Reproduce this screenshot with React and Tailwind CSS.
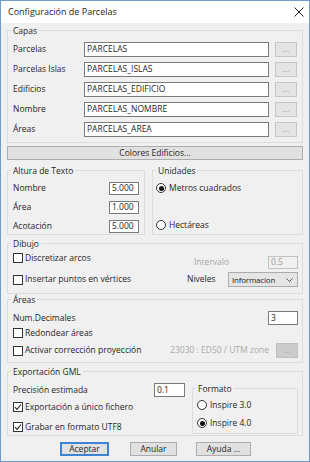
import React from 'react';

const Group = ({ title, className = '', children }) => (
  <div className={`flex flex-col border border-[#dcdcdc] ${className}`}>
    <span className="-mt-[6px] ml-[3px] w-fit bg-[#f0f0f0] px-[2px] leading-[11px]">{title}</span>
    {children}
  </div>
);

const TextBox = ({ value, className = '' }) => (
  <div className={`flex items-center border border-[#7a7a7a] bg-white pl-[2px] leading-none ${className}`}>
    {value}
  </div>
);

const DotsButton = ({ disabled }) => (
  <div
    className={`flex h-[15px] w-[22px] items-center justify-center border leading-none ${
      disabled ? 'border-[#bfbfbf] bg-[#cccccc] text-[#a8a8a8]' : 'border-[#c6c6c6] bg-[#e4e4e4] text-[#9a9a9a]'
    }`}
  >
    ...
  </div>
);

const Check = ({ checked, label }) => (
  <div className="flex items-center gap-[2px] leading-none">
    <div className="flex h-[10px] w-[10px] items-center justify-center border border-[#333] bg-white">
      {checked && (
        <svg width="8" height="8" viewBox="0 0 8 8">
          <path d="M1 4.2 L3 6.3 L7 1.5" fill="none" stroke="#222" strokeWidth="1.1" />
        </svg>
      )}
    </div>
    <span>{label}</span>
  </div>
);

const Radio = ({ checked, label }) => (
  <div className="flex items-center gap-[3px] leading-none">
    <div className="flex h-[10px] w-[10px] items-center justify-center rounded-full border border-[#333] bg-white">
      {checked && <div className="h-[5px] w-[5px] rounded-full bg-[#111]" />}
    </div>
    <span>{label}</span>
  </div>
);

const PushButton = ({ label, className = '' }) => (
  <div className={`flex h-[14px] items-center justify-center border border-[#adadad] bg-[#e1e1e1] leading-none ${className}`}>
    {label}
  </div>
);

export default function App() {
  const capas = [
    ['Parcelas', 'PARCELAS'],
    ['Parcelas Islas', 'PARCELAS_ISLAS'],
    ['Edificios', 'PARCELAS_EDIFICIO'],
    ['Nombre', 'PARCELAS_NOMBRE'],
    ['Áreas', 'PARCELAS_AREA'],
  ];

  const alturas = [
    ['Nombre', '5.000'],
    ['Área', '1.000'],
    ['Acotación', '5.000'],
  ];

  return (
    <div className="flex h-[462px] w-[310px] flex-col border border-[#6f9cc9] bg-[#f0f0f0] font-['Open_Sans',sans-serif] text-[8.5px] text-[#262626]">
      {/* Title bar */}
      <div className="flex h-[22px] items-center bg-white pl-[7px] pr-[5px]">
        <span className="text-[9px]">Configuración de Parcelas</span>
        <svg className="ml-auto" width="10" height="10" viewBox="0 0 10 10">
          <path d="M0.5 0.5 L9.5 9.5 M9.5 0.5 L0.5 9.5" stroke="#222" strokeWidth="1" />
        </svg>
      </div>

      <div className="flex flex-col px-[6px] pt-[7px]">
        {/* Capas */}
        <Group title="Capas" className="h-[113px]">
          <div className="mt-[6px] flex flex-col gap-[5px] pl-[5px]">
            {capas.map(([label, value]) => (
              <div key={label} className="flex h-[15px] items-center">
                <span className="w-[71px]">{label}</span>
                <TextBox value={value} className="h-[15px] w-[185px]" />
                <div className="ml-[6px]">
                  <DotsButton />
                </div>
              </div>
            ))}
          </div>
        </Group>

        <PushButton label="Colores Edificios..." className="mt-[3px] w-full" />

        {/* Altura / Unidades */}
        <div className="mt-[10px] flex gap-[7px]">
          <Group title="Altura de Texto" className="h-[65px] w-[138px]">
            <div className="mt-[6px] flex flex-col gap-[6px] pl-[5px]">
              {alturas.map(([label, value]) => (
                <div key={label} className="flex h-[13px] items-center">
                  <span className="w-[96px]">{label}</span>
                  <TextBox value={value} className="h-[13px] w-[30px]" />
                </div>
              ))}
            </div>
          </Group>
          <Group title="Unidades" className="h-[65px] flex-1">
            <div className="mt-[7px] pl-[3px]">
              <Radio checked label="Metros cuadrados" />
            </div>
            <div className="mt-[27px] pl-[3px]">
              <Radio label="Hectáreas" />
            </div>
          </Group>
        </div>

        {/* Dibujo */}
        <Group title="Dibujo" className="mt-[8px] h-[51px]">
          <div className="mt-[3px] flex h-[16px] items-start pl-[5px] pr-[4px]">
            <div className="mt-[1px]">
              <Check label="Discretizar arcos" />
            </div>
            <div className="ml-auto mt-[4px] flex w-[104px] items-center justify-between">
              <span className="leading-none text-[#a6a6a6]">Intervalo</span>
              <div className="flex h-[13px] w-[30px] items-center border border-[#c2c2c2] bg-[#f0f0f0] pl-[2px] leading-none text-[#9a9a9a]">
                0.5
              </div>
            </div>
          </div>
          <div className="mt-[4px] flex h-[15px] items-center pl-[5px] pr-[4px]">
            <Check label="Insertar puntos en vértices" />
            <div className="ml-auto flex w-[111px] items-center justify-between">
              <span className="leading-none">Niveles</span>
              <div className="flex h-[15px] w-[70px] items-center border border-[#acacac] bg-[#e5e5e5] pl-[3px] pr-[4px] leading-none">
                <span className="whitespace-nowrap text-[8px] tracking-[-0.2px]">Informacion</span>
                <svg className="ml-auto shrink-0" width="7" height="4" viewBox="0 0 7 4">
                  <path d="M0.5 0.5 L3.5 3.5 L6.5 0.5" fill="none" stroke="#555" strokeWidth="1" />
                </svg>
              </div>
            </div>
          </div>
        </Group>

        {/* Áreas */}
        <Group title="Áreas" className="mt-[5px] h-[64px]">
          <div className="mt-[6px] flex h-[14px] items-center pl-[5px] pr-[4px]">
            <span className="leading-none">Num.Decimales</span>
            <TextBox value="3" className="ml-auto h-[14px] w-[30px]" />
          </div>
          <div className="mt-[2px] flex h-[12px] items-center pl-[5px]">
            <Check label="Redondear áreas" />
          </div>
          <div className="mt-[4px] flex h-[15px] items-center pl-[5px] pr-[4px]">
            <Check label="Activar corrección proyección" />
            <span className="ml-auto leading-none text-[#a9a9a9]">23030 : ED50 / UTM zone</span>
            <div className="ml-[7px]">
              <DotsButton disabled />
            </div>
          </div>
        </Group>

        {/* Exportación GML */}
        <Group title="Exportación GML" className="mt-[8px] h-[65px]">
          <div className="flex pl-[5px] pr-[4px]">
            <div className="flex flex-col">
              <div className="mt-[6px] flex h-[14px] items-center">
                <span className="w-[141px] leading-none">Precisión estimada</span>
                <TextBox value="0.1" className="h-[14px] w-[31px]" />
              </div>
              <div className="mt-[4px] flex h-[12px] items-center">
                <Check checked label="Exportación a único fichero" />
              </div>
              <div className="mt-[8px] flex h-[12px] items-center">
                <Check checked label="Grabar en formato UTF8" />
              </div>
            </div>
            <Group title="Formato" className="ml-auto mt-[11px] h-[46px] w-[106px]">
              <div className="mt-[6px] pl-[4px]">
                <Radio label="Inspire 3.0" />
              </div>
              <div className="mt-[8px] pl-[4px]">
                <Radio checked label="Inspire 4.0" />
              </div>
            </Group>
          </div>
        </Group>

        {/* Buttons */}
        <div className="mt-[6px] flex">
          <div className="ml-[53px] flex h-[14px] w-[49px] items-center justify-center border-2 border-[#3d85d4] bg-[#e1e1e1] leading-none">
            Aceptar
          </div>
          <PushButton label="Anular" className="ml-[21px] w-[47px]" />
          <PushButton label="Ayuda ..." className="ml-[19px] w-[55px]" />
        </div>
      </div>
    </div>
  );
}
